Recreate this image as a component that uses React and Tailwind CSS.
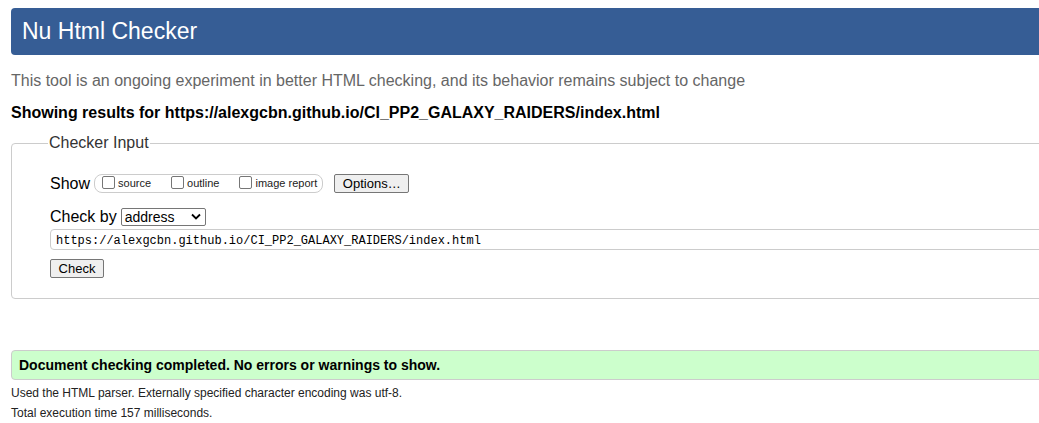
import React from 'react';

const sans = { fontFamily: '"Liberation Sans", Arial, sans-serif' };

function Box({ label }) {
  return (
    <label className="flex items-center">
      <span className="w-[13px] h-[13px] border border-[#767676] rounded-[2px] bg-white mr-[3px] -mt-[2px]" />
      <span className="text-[11px] text-[#222]">{label}</span>
    </label>
  );
}

function Btn({ children, w }) {
  return (
    <button className={`h-[19px] ${w} bg-[#efefef] border border-[#767676] rounded-[2px] text-[13px] leading-none text-black flex items-center justify-center`}>
      {children}
    </button>
  );
}

export default function App() {
  return (
    <div className="w-[1039px] h-[423px] overflow-hidden bg-white text-black" style={sans}>
      <div className="w-[1100px] pl-[11px] pt-[8px]">
        <h1 className="h-[47px] bg-[#365d95] rounded-[4px] text-white text-[23px] leading-[47px] pl-[11px]">
          Nu Html Checker
        </h1>

        <p className="mt-[17px] text-[16px] leading-[18px] text-[#666]">
          This tool is an ongoing experiment in better HTML checking, and its behavior remains subject to change
        </p>
        <p className="mt-[14px] text-[16px] leading-[18px] font-bold">
          Showing results for https://alexgcbn.github.io/CI_PP2_GALAXY_RAIDERS/index.html
        </p>

        <fieldset className="mt-[12px] border border-[#ccc] rounded-[4px] pb-[20px]">
          <legend className="ml-[36px] px-[1px] text-[16px] leading-[18px] text-[#333]">Checker Input</legend>

          <div className="pl-[38px]">
            <div className="mt-[22px] flex items-center h-[19px]">
              <span className="text-[16px] mr-[4px]">Show</span>
              <div className="flex items-center h-[19px] border border-[#ccc] rounded-[8px] pl-[7px] pr-[5px] gap-[20px]">
                <Box label="source" />
                <Box label="outline" />
                <Box label="image report" />
              </div>
              <div className="ml-[11px]">
                <Btn w="w-[75px]">Options…</Btn>
              </div>
            </div>

            <div className="mt-[14px] flex items-center h-[19px]">
              <span className="text-[16px] mr-[4px]">Check by</span>
              <div className="h-[18px] w-[85px] border border-[#767676] rounded-[2px] flex items-center justify-between pl-[3px] pr-[4px]">
                <span className="text-[14px] leading-none">address</span>
                <svg width="10" height="7" viewBox="0 0 10 7">
                  <path d="M1 1.5 L5 5.5 L9 1.5" fill="none" stroke="#000" strokeWidth="1.8" />
                </svg>
              </div>
            </div>

            <div className="mt-[3px] h-[21px] border border-[#ccc] rounded-[4px] flex items-center pl-[5px] pt-[2px]">
              <span className="text-[12px]" style={{ fontFamily: '"Liberation Mono", monospace' }}>
                https://alexgcbn.github.io/CI_PP2_GALAXY_RAIDERS/index.html
              </span>
            </div>

            <div className="mt-[9px]">
              <Btn w="w-[54px]">Check</Btn>
            </div>
          </div>
        </fieldset>

        <div className="mt-[51px] h-[30px] bg-[#ccffcc] border border-[#ccc] rounded-[4px] flex items-center pl-[7px]">
          <span className="text-[14px] font-bold">Document checking completed. No errors or warnings to show.</span>
        </div>

        <p className="mt-[6px] text-[12px] leading-[14px] text-[#222]">
          Used the HTML parser. Externally specified character encoding was utf-8.
        </p>
        <p className="mt-[6px] text-[12px] leading-[14px] text-[#222]">Total execution time 157 milliseconds.</p>
      </div>
    </div>
  );
}
